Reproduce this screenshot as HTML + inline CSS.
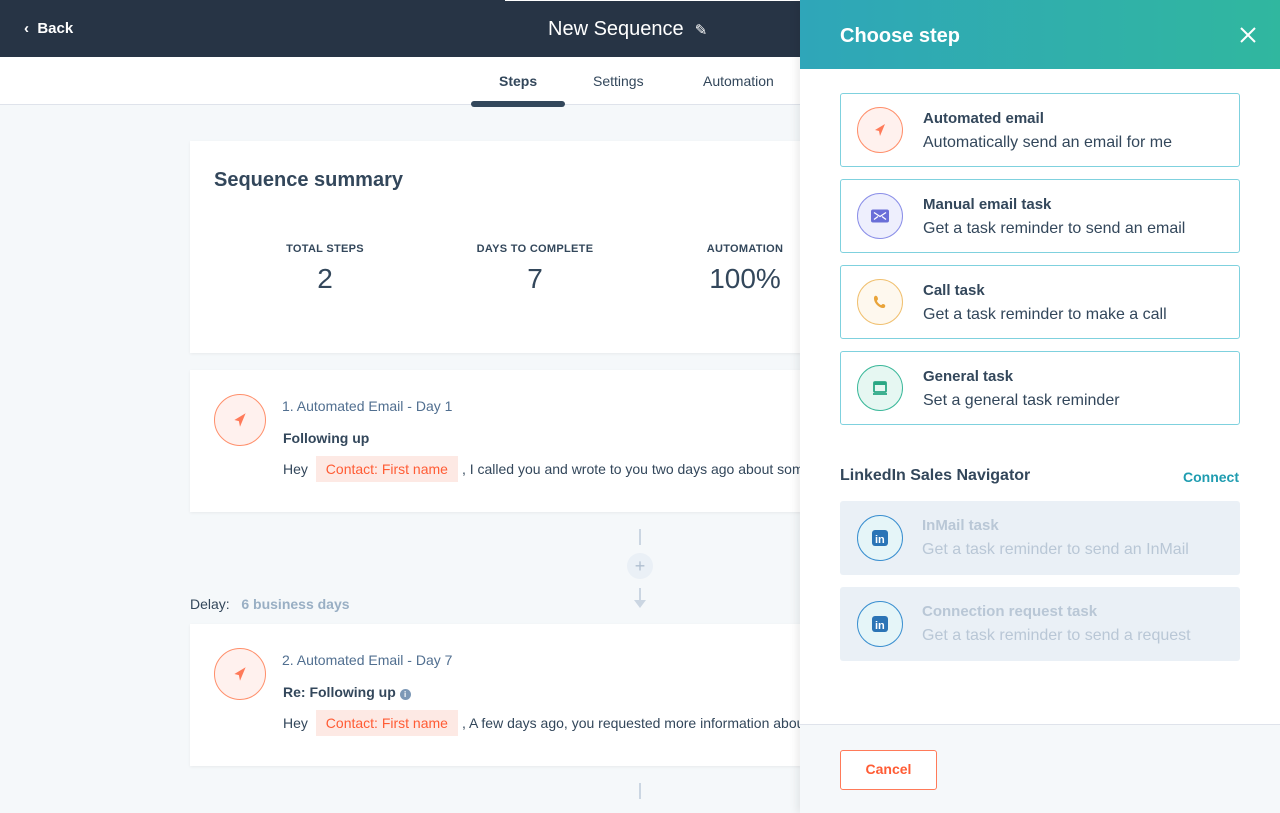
<!DOCTYPE html>
<html><head><meta charset="utf-8"><style>
*{box-sizing:border-box;margin:0;padding:0}
body{width:1280px;height:813px;overflow:hidden;font-family:"Liberation Sans",sans-serif;background:#f5f8fa;position:relative;color:#33475b}
.top{position:absolute;left:0;top:0;width:800px;height:57px;background:#273445}
.top .back{position:absolute;left:24px;top:20px;color:#fff;font-weight:bold;font-size:15px}
.top .title{position:absolute;left:548px;top:18px;color:#fff;font-size:20px}
.tabs{position:absolute;left:0;top:57px;width:800px;height:48px;background:#fff;border-bottom:1px solid #dfe3eb}
.tab{position:absolute;top:16px;font-size:14px;color:#33475b}
.ul{position:absolute;left:471px;top:101px;width:94px;height:6px;border-radius:3px;background:#33475b}
.card{position:absolute;left:190px;width:612px;background:#fff;box-shadow:0 1px 3px rgba(0,0,0,.06)}
.stat{position:absolute;text-align:center;width:200px}
.stat .l{font-size:11px;font-weight:bold;letter-spacing:.3px}
.stat .v{font-size:28px;margin-top:8px}
.ic{position:absolute;width:52px;height:52px;border-radius:50%;border:1.5px solid #ff8f6b;background:#fff1ee}
.pill{display:inline-block;background:#fde9e4;color:#ff5c35;padding:5px 10px;margin:0 4px;font-size:14px}
.panel{position:absolute;left:800px;top:0;width:480px;height:813px;background:#fff;box-shadow:-3px 0 8px rgba(0,0,0,.08)}
.ph{height:69px;background:linear-gradient(90deg,#2fa6b9,#30b79f);position:relative}
.ph .t{position:absolute;left:40px;top:25px;color:#fff;font-weight:bold;font-size:20px}
.opt{position:absolute;left:40px;width:400px;height:74px;border:1.5px solid #7fd1de;border-radius:3px;background:#fff}
.opt.dis{border:none;background:#eaf0f6}
.opt .c{position:absolute;left:16px;top:13px;width:46px;height:46px;border-radius:50%}
.opt .h{position:absolute;left:82px;top:16px;font-weight:bold;font-size:15px;color:#33475b}
.opt .s{position:absolute;left:82px;top:40px;font-size:16px;color:#33475b}
.opt.dis .h,.opt.dis .s{color:#b9c7d6}
.ci{position:absolute;left:50%;top:50%;transform:translate(-50%,-50%)}
</style></head><body>
<div class="top"><div class="back">&#8249;&nbsp; Back</div><div class="title">New Sequence &nbsp;<span style="font-size:15px">✎</span></div></div>
<div style="position:absolute;left:505px;top:0;width:295px;height:1px;background:#fff"></div>
<div class="tabs">
<div class="tab" style="left:499px;font-weight:bold">Steps</div>
<div class="tab" style="left:593px">Settings</div>
<div class="tab" style="left:703px">Automation</div>
</div>
<div class="ul"></div>

<div class="card" style="top:141px;height:212px">
<div style="position:absolute;left:24px;top:28px;font-size:20px;font-weight:bold">Sequence summary</div>
<div class="stat" style="left:35px;top:102px"><div class="l">TOTAL STEPS</div><div class="v">2</div></div>
<div class="stat" style="left:245px;top:102px"><div class="l">DAYS TO COMPLETE</div><div class="v">7</div></div>
<div class="stat" style="left:455px;top:102px"><div class="l">AUTOMATION</div><div class="v">100%</div></div>
</div>

<div class="card" style="top:370px;height:142px">
<div class="ic" style="left:24px;top:24px"><svg class="ci" width="18" height="18" viewBox="0 0 16 16"><path d="M13 2L3 8l4 1 1 5z" fill="#ff7a59"/></svg></div>
<div style="position:absolute;left:92px;top:28px;font-size:14px;color:#516f90">1. Automated Email - Day 1</div>
<div style="position:absolute;left:93px;top:60px;font-size:14px;font-weight:bold">Following up</div>
<div style="position:absolute;left:93px;top:86px;font-size:14px;white-space:nowrap;width:519px;overflow:hidden">Hey <span class="pill">Contact: First name</span>, I called you and wrote to you two days ago about something</div>
</div>

<div style="position:absolute;left:639px;top:529px;width:2px;height:16px;background:#cbd6e2"></div>
<div style="position:absolute;left:627px;top:553px;width:26px;height:26px;border-radius:50%;background:#eaf0f6;color:#b0bfd0;text-align:center;line-height:26px;font-size:18px">+</div>
<div style="position:absolute;left:639px;top:588px;width:2px;height:16px;background:#cbd6e2"></div>
<div style="position:absolute;left:634px;top:600px;width:0;height:0;border-left:6px solid transparent;border-right:6px solid transparent;border-top:8px solid #cbd6e2"></div>
<div style="position:absolute;left:190px;top:596px;font-size:14px">Delay: &nbsp;&nbsp;<span style="color:#99afc4;font-weight:bold">6 business days</span></div>

<div class="card" style="top:624px;height:142px">
<div class="ic" style="left:24px;top:24px"><svg class="ci" width="18" height="18" viewBox="0 0 16 16"><path d="M13 2L3 8l4 1 1 5z" fill="#ff7a59"/></svg></div>
<div style="position:absolute;left:92px;top:28px;font-size:14px;color:#516f90">2. Automated Email - Day 7</div>
<div style="position:absolute;left:93px;top:60px;font-size:14px;font-weight:bold">Re: Following up <span style="display:inline-block;width:11px;height:11px;border-radius:50%;background:#7c98b6;color:#fff;font-size:8px;text-align:center;line-height:11px;vertical-align:0">i</span></div>
<div style="position:absolute;left:93px;top:86px;font-size:14px;white-space:nowrap;width:519px;overflow:hidden">Hey <span class="pill">Contact: First name</span>, A few days ago, you requested more information about our</div>
</div>
<div style="position:absolute;left:639px;top:783px;width:2px;height:16px;background:#cbd6e2"></div>

<div class="panel">
<div class="ph"><div class="t">Choose step</div>
<svg style="position:absolute;left:440px;top:27px" width="16" height="16" viewBox="0 0 16 16"><path d="M1 1L15 15M15 1L1 15" stroke="#fff" stroke-width="2"/></svg></div>

<div class="opt" style="top:93px"><div class="c" style="border:1.5px solid #ff8f6b;background:#fff1ee"><svg class="ci" width="16" height="16" viewBox="0 0 16 16"><path d="M13 2L3 8l4 1 1 5z" fill="#ff7a59"/></svg></div><div class="h">Automated email</div><div class="s">Automatically send an email for me</div></div>
<div class="opt" style="top:179px"><div class="c" style="border:1.5px solid #8b8fe8;background:#eeeffd"><svg class="ci" width="18" height="13" viewBox="0 0 18 13"><rect width="18" height="13" rx="2" fill="#6a6fd8"/><path d="M3 3l6 4 6-4M3 10l4-3M15 10l-4-3" stroke="#fff" stroke-width="1.3" fill="none"/></svg></div><div class="h">Manual email task</div><div class="s">Get a task reminder to send an email</div></div>
<div class="opt" style="top:265px"><div class="c" style="border:1.5px solid #f0c070;background:#fef8ee"><svg class="ci" width="16" height="16" viewBox="0 0 16 16"><path d="M3 2c2-1 3 2 3 3s-1 1-1 2 3 4 4 4 1-1 2-1 3 1 2 3c-1 2-5 1-8-2S1 3 3 2z" fill="#e9a43a"/></svg></div><div class="h">Call task</div><div class="s">Get a task reminder to make a call</div></div>
<div class="opt" style="top:351px"><div class="c" style="border:1.5px solid #3bb89a;background:#e6f7f2"><svg class="ci" width="16" height="16" viewBox="0 0 16 16"><rect x="2" y="2" width="12" height="10" rx="1" fill="none" stroke="#2aa784" stroke-width="1.8"/><rect x="2" y="2" width="12" height="3" fill="#2aa784"/><path d="M1 14h14" stroke="#2aa784" stroke-width="1.8"/></svg></div><div class="h">General task</div><div class="s">Set a general task reminder</div></div>

<div style="position:absolute;left:40px;top:467px;font-size:16px;font-weight:bold">LinkedIn Sales Navigator</div>
<div style="position:absolute;left:383px;top:469px;font-size:14px;font-weight:bold;color:#1f9cb0">Connect</div>

<div class="opt dis" style="top:501px"><div class="c" style="border:1.5px solid #3a8fd0;background:#e5f5f8;left:17px;top:14px"><svg class="ci" width="16" height="16" viewBox="0 0 16 16"><rect width="16" height="16" rx="3" fill="#2b74b6"/><text x="3" y="13" font-family="Liberation Sans" font-weight="bold" font-size="11" fill="#fff">in</text></svg></div><div class="h" style="top:16px">InMail task</div><div class="s">Get a task reminder to send an InMail</div></div>
<div class="opt dis" style="top:587px"><div class="c" style="border:1.5px solid #3a8fd0;background:#e5f5f8;left:17px;top:14px"><svg class="ci" width="16" height="16" viewBox="0 0 16 16"><rect width="16" height="16" rx="3" fill="#2b74b6"/><text x="3" y="13" font-family="Liberation Sans" font-weight="bold" font-size="11" fill="#fff">in</text></svg></div><div class="h" style="top:16px">Connection request task</div><div class="s">Get a task reminder to send a request</div></div>

<div style="position:absolute;left:0;top:724px;width:480px;height:89px;background:#f5f8fa;border-top:1px solid #dfe3eb">
<div style="position:absolute;left:40px;top:25px;width:97px;height:40px;border:1.5px solid #ff7a59;border-radius:3px;background:#fff;color:#ff5c35;font-weight:bold;font-size:14px;text-align:center;line-height:37px">Cancel</div>
</div>
</div>
</body></html>
